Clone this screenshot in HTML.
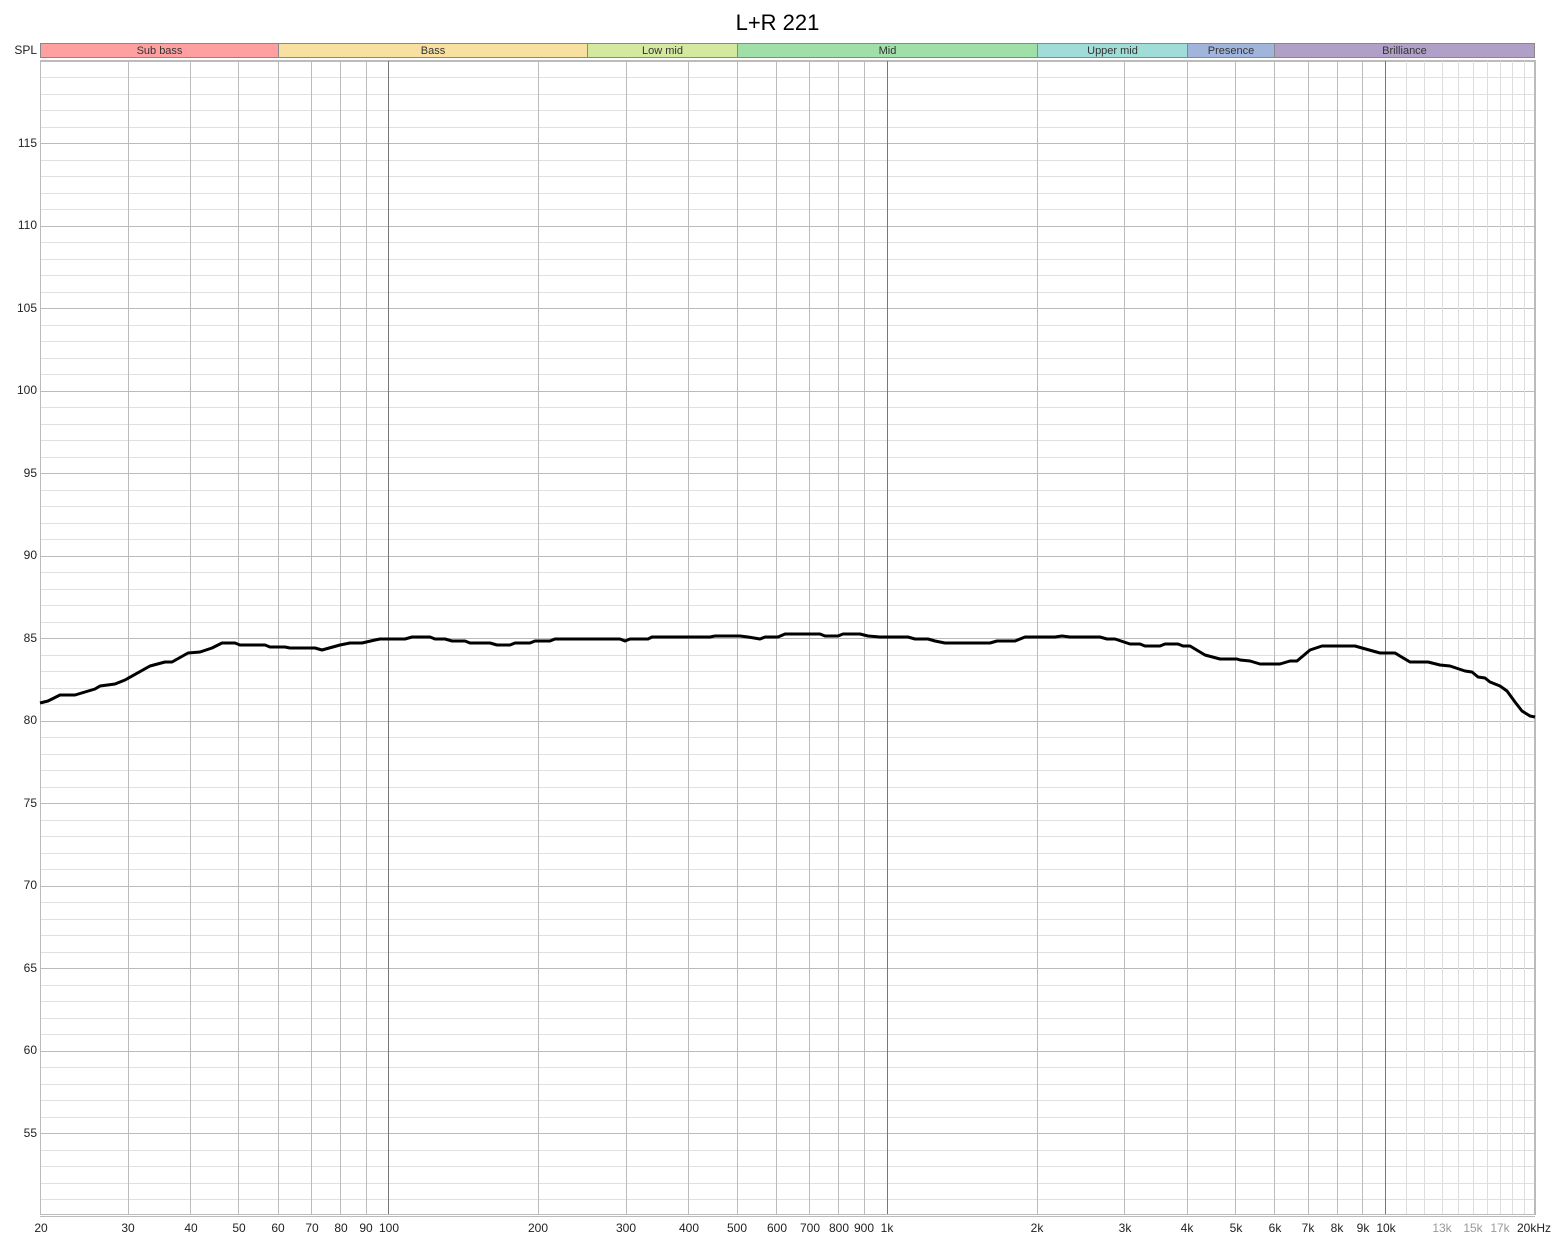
<!DOCTYPE html>
<html><head><meta charset="utf-8"><style>
html,body{margin:0;padding:0;background:#fff;width:1555px;height:1240px;overflow:hidden;font-family:"Liberation Sans",sans-serif;}
.t{position:absolute;font-size:12px;color:#222;white-space:nowrap;}
.yl{position:absolute;right:1518px;font-size:12px;color:#222;}
.xl{position:absolute;top:1221px;font-size:12px;color:#222;transform:translateX(-50%);}
.g{color:#999;}
.band{position:absolute;top:44px;height:13px;font-size:11px;line-height:14px;text-align:center;color:#333;box-sizing:border-box;border-right:1px solid #888;}
</style></head><body>
<div class="t" style="left:0;width:1555px;text-align:center;top:10px;font-size:22px;color:#000">L+R 221</div>
<div class="t" style="right:1518px;top:43px;font-size:12px">SPL</div>
<div style="position:absolute;left:40px;top:43px;width:1495px;height:15px;border:1px solid #888;box-sizing:border-box"></div>
<div class="band" style="left:41px;width:238px;background:#ffa0a0">Sub bass</div>
<div class="band" style="left:279px;width:309px;background:#f8e0a0">Bass</div>
<div class="band" style="left:588px;width:150px;background:#d4e8a0">Low mid</div>
<div class="band" style="left:738px;width:300px;background:#a0e0a8">Mid</div>
<div class="band" style="left:1038px;width:150px;background:#a0dcd8">Upper mid</div>
<div class="band" style="left:1188px;width:87px;background:#a0b4dc">Presence</div>
<div class="band" style="left:1275px;width:259px;background:#b0a0c8;border-right:none">Brilliance</div>
<svg id="s" width="1555" height="1240" style="position:absolute;left:0;top:0"></svg>
<div class="yl" style="top:136px">115</div>
<div class="yl" style="top:218px">110</div>
<div class="yl" style="top:301px">105</div>
<div class="yl" style="top:383px">100</div>
<div class="yl" style="top:466px">95</div>
<div class="yl" style="top:548px">90</div>
<div class="yl" style="top:631px">85</div>
<div class="yl" style="top:713px">80</div>
<div class="yl" style="top:796px">75</div>
<div class="yl" style="top:878px">70</div>
<div class="yl" style="top:961px">65</div>
<div class="yl" style="top:1043px">60</div>
<div class="yl" style="top:1126px">55</div>
<div class="xl" style="left:41px">20</div>
<div class="xl" style="left:128px">30</div>
<div class="xl" style="left:191px">40</div>
<div class="xl" style="left:239px">50</div>
<div class="xl" style="left:278px">60</div>
<div class="xl" style="left:312px">70</div>
<div class="xl" style="left:341px">80</div>
<div class="xl" style="left:366px">90</div>
<div class="xl" style="left:389px">100</div>
<div class="xl" style="left:538px">200</div>
<div class="xl" style="left:626px">300</div>
<div class="xl" style="left:689px">400</div>
<div class="xl" style="left:737px">500</div>
<div class="xl" style="left:777px">600</div>
<div class="xl" style="left:810px">700</div>
<div class="xl" style="left:839px">800</div>
<div class="xl" style="left:864px">900</div>
<div class="xl" style="left:887px">1k</div>
<div class="xl" style="left:1037px">2k</div>
<div class="xl" style="left:1125px">3k</div>
<div class="xl" style="left:1187px">4k</div>
<div class="xl" style="left:1236px">5k</div>
<div class="xl" style="left:1275px">6k</div>
<div class="xl" style="left:1308px">7k</div>
<div class="xl" style="left:1337px">8k</div>
<div class="xl" style="left:1363px">9k</div>
<div class="xl" style="left:1386px">10k</div>
<div class="xl g" style="left:1442px">13k</div>
<div class="xl g" style="left:1473px">15k</div>
<div class="xl g" style="left:1500px">17k</div>
<div class="xl" style="left:1534px">20kHz</div>
<script>
var s=document.getElementById('s'),h='';
function X(f){return 40+Math.log10(f/20)/3*1495;}
var T=60,B=1215;
for(var d=50;d<=120;d++){var y=143+(115-d)*16.5;if(y<T-0.5||y>B+0.5)continue;
h+='<line x1="40" x2="1535" y1="'+(Math.round(y)+0.5)+'" y2="'+(Math.round(y)+0.5)+'" stroke="'+(d%5==0?'#bbb':'#e0e0e0')+'" stroke-width="1"/>';}
var fs=[];
for(var dec=10;dec<=10000;dec*=10)for(var m=1;m<10;m++){var f=dec*m;if(f>=20&&f<=20000)fs.push(f);}
for(var f=11000;f<20000;f+=1000)fs.push(f);
fs.forEach(function(f){var x=Math.round(X(f))+0.5;var c='#bbb';
if(f==100||f==1000||f==10000)c='#777';else if(f>10000&&f<20000)c='#ddd';
h+='<line x1="'+x+'" x2="'+x+'" y1="'+T+'" y2="'+B+'" stroke="'+c+'" stroke-width="1"/>';});
h+='<rect x="40.5" y="60.5" width="1494" height="1154" fill="none" stroke="#bbb"/>';
var p=[[40,703],[48,701],[60,695],[75,695],[95,689],[100,686],[115,684],[125,680],[150,666],[165,662],[172,662],[188,653],[200,652],[212,648],[222,643],[235,643],[240,645],[265,645],[270,647],[285,647],[290,648],[315,648],[322,650],[340,645],[350,643],[362,643],[375,640],[380,639],[405,639],[412,637],[430,637],[435,639],[445,639],[452,641],[465,641],[470,643],[490,643],[497,645],[510,645],[515,643],[530,643],[535,641],[550,641],[555,639],[620,639],[625,641],[630,639],[648,639],[652,637],[710,637],[715,636],[740,636],[748,637],[760,639],[765,637],[778,637],[785,634],[820,634],[825,636],[838,636],[843,634],[860,634],[868,636],[880,637],[908,637],[915,639],[928,639],[935,641],[945,643],[990,643],[997,641],[1015,641],[1025,637],[1055,637],[1062,636],[1070,637],[1100,637],[1107,639],[1115,639],[1130,644],[1140,644],[1145,646],[1160,646],[1165,644],[1178,644],[1183,646],[1190,646],[1205,655],[1220,659],[1237,659],[1240,660],[1250,661],[1260,664],[1280,664],[1290,661],[1297,661],[1310,650],[1322,646],[1355,646],[1362,648],[1380,653],[1395,653],[1410,662],[1428,662],[1440,665],[1450,666],[1465,671],[1472,672],[1478,677],[1485,678],[1490,682],[1500,686],[1507,691],[1515,702],[1522,711],[1530,716],[1535,717]];
h+='<polyline fill="none" stroke="#000" stroke-width="3" stroke-linejoin="round" points="'+p.map(function(a){return a.join(',')}).join(' ')+'"/>';
s.innerHTML=h;
</script>
</body></html>
